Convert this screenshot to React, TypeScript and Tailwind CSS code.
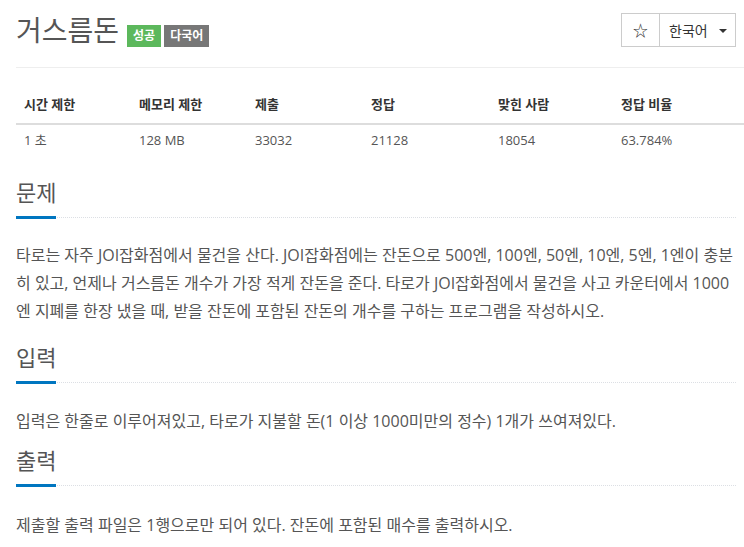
import React from "react";

const FONT = { fontFamily: "'Open Sans','Noto Sans CJK KR',sans-serif" };

function Headline({ title }: { title: string }) {
  return (
    <div className="border-b border-dotted border-[#dcdfe4]">
      <h2 className="inline-block border-b-[3px] border-[#0076C0] pb-[10px] mb-[-2px] text-[22px] leading-[28px] text-[#555] font-normal">
        {title}
      </h2>
    </div>
  );
}

export default function App() {
  const heads = ["시간 제한", "메모리 제한", "제출", "정답", "맞힌 사람", "정답 비율"];
  const vals = ["1 초", "128 MB", "33032", "21128", "18054", "63.784%"];
  const widths = ["w-[115px]", "w-[116px]", "w-[116px]", "w-[127px]", "w-[123px]", "flex-1"];
  return (
    <div className="bg-white min-h-[547px] pl-4 text-[#555] overflow-hidden" style={FONT}>
      <div className="flex justify-between pt-[13px] pr-2">
        <div className="flex items-start">
          <h1 className="text-[28px] leading-[34px] text-[#555] font-normal">거스름돈</h1>
          <span className="ml-[8px] mt-[12px] h-[22px] px-[6px] bg-[#5cb85c] text-white text-[12px] font-bold leading-[22px]">성공</span>
          <span className="ml-[3px] mt-[12px] h-[22px] px-[6px] bg-[#777] text-white text-[12px] font-bold leading-[22px]">다국어</span>
        </div>
        <div className="flex h-[34px] border border-[#ccc] text-[#333]">
          <div className="w-[38px] flex items-center justify-center border-r border-[#ccc] text-[15px]">☆</div>
          <div className="w-[75px] flex items-center pl-[9px] text-[14px]">
            한국어
            <span className="ml-[11px] mt-[2px] w-0 h-0 border-l-[4px] border-r-[4px] border-t-[4px] border-l-transparent border-r-transparent border-t-[#333]"></span>
          </div>
        </div>
      </div>
      <div className="mt-[20px] border-t border-[#eee]"></div>

      <div className="mt-[19px]">
        <div className="flex h-[38px] items-center border-b-2 border-[#ddd] text-[13px] font-bold text-[#333]">
          {heads.map((h, i) => (
            <div key={i} className={`${widths[i]} pl-2`}>{h}</div>
          ))}
        </div>
        <div className="flex h-[32px] items-center text-[13px] text-[#555]">
          {vals.map((v, i) => (
            <div key={i} className={`${widths[i]} pl-2`}>{v}</div>
          ))}
        </div>
      </div>

      <div className="mt-[21px] pr-[8px]">
        <Headline title="문제" />
        <p className="mt-[23px] mb-[18px] text-[16px] leading-[28px]">
          타로는 자주 JOI잡화점에서 물건을 산다. JOI잡화점에는 잔돈으로 500엔, 100엔, 50엔, 10엔, 5엔, 1엔이 충분히 있고, 언제나 거스름돈 개수가 가장 적게 잔돈을 준다. 타로가 JOI잡화점에서 물건을 사고 카운터에서 1000엔 지폐를 한장 냈을 때, 받을 잔돈에 포함된 잔돈의 개수를 구하는 프로그램을 작성하시오.
        </p>
        <Headline title="입력" />
        <p className="mt-[24px] mb-[11px] text-[16px] leading-[28px]">
          입력은 한줄로 이루어져있고, 타로가 지불할 돈(1 이상 1000미만의 정수) 1개가 쓰여져있다.
        </p>
        <Headline title="출력" />
        <p className="mt-[25px] text-[16px] leading-[28px]">
          제출할 출력 파일은 1행으로만 되어 있다. 잔돈에 포함된 매수를 출력하시오.
        </p>
      </div>
    </div>
  );
}
